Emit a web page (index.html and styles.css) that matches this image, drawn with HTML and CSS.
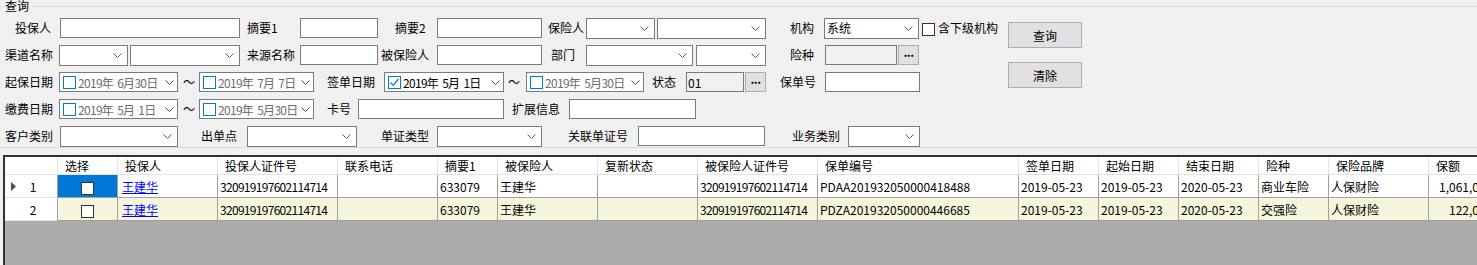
FILE: index.html
```html
<!DOCTYPE html>
<html lang="zh-CN">

<head>
    <meta charset="UTF-8">
    <title>保单查询</title>
    <link rel="stylesheet" href="styles.css">
</head>

<body>
    <fieldset class="query">
        <legend>查询</legend>
        <div class="qbody">
            <div class="rows">
                <!-- 第一行 -->
                <div class="row">
                    <span class="lbl m15">投保人</span>
                    <input class="tb w180 m9" type="text">
                    <span class="lbl w30 m7">摘要1</span>
                    <input class="tb w78 m23" type="text">
                    <span class="lbl w30 m17">摘要2</span>
                    <input class="tb w105 m12" type="text">
                    <span class="lbl m6">保险人</span>
                    <div class="combo w69 m2"><svg class="chev" viewBox="0 0 9 5"><path d="M.5 .5 4.5 4.5 8.5 .5"/></svg></div>
                    <div class="combo w109 m2"><svg class="chev" viewBox="0 0 9 5"><path d="M.5 .5 4.5 4.5 8.5 .5"/></svg></div>
                    <span class="lbl m24">机构</span>
                    <div class="combo w95 m10"><span class="val">系统</span><svg class="chev" viewBox="0 0 9 5"><path d="M.5 .5 4.5 4.5 8.5 .5"/></svg></div>
                    <i class="chk m3"></i>
                    <span class="lbl m3">含下级机构</span>
                </div>
                <!-- 第二行 -->
                <div class="row">
                    <span class="lbl m5">渠道名称</span>
                    <div class="combo w69 m6"><svg class="chev" viewBox="0 0 9 5"><path d="M.5 .5 4.5 4.5 8.5 .5"/></svg></div>
                    <div class="combo w110 m2"><svg class="chev" viewBox="0 0 9 5"><path d="M.5 .5 4.5 4.5 8.5 .5"/></svg></div>
                    <span class="lbl m7">来源名称</span>
                    <input class="tb w78 m5" type="text">
                    <span class="lbl m3">被保险人</span>
                    <input class="tb w105 m8" type="text">
                    <span class="lbl m9">部门</span>
                    <div class="combo w107 m11"><svg class="chev" viewBox="0 0 9 5"><path d="M.5 .5 4.5 4.5 8.5 .5"/></svg></div>
                    <div class="combo w70 m3"><svg class="chev" viewBox="0 0 9 5"><path d="M.5 .5 4.5 4.5 8.5 .5"/></svg></div>
                    <span class="lbl m24">险种</span>
                    <input class="tb ro w72 m11" type="text" readonly>
                    <span class="dots m1">...</span>
                </div>
                <!-- 第三行 -->
                <div class="row">
                    <span class="lbl m5">起保日期</span>
                    <div class="dtp w119 m6"><i class="cb"></i><span class="dt">2019年  6月30日</span><svg class="chev" viewBox="0 0 9 5"><path d="M.5 .5 4.5 4.5 8.5 .5"/></svg></div>
                    <span class="tl m5">～</span>
                    <div class="dtp w115 m4"><i class="cb"></i><span class="dt">2019年  7月  7日</span><svg class="chev" viewBox="0 0 9 5"><path d="M.5 .5 4.5 4.5 8.5 .5"/></svg></div>
                    <span class="lbl m13">签单日期</span>
                    <div class="dtp w120 m9"><i class="cb"><svg viewBox="0 0 11 11"><path d="M1.5 5.5 4.2 8.3 9.5 2"/></svg></i><span class="dt on">2019年  5月  1日</span><svg class="chev" viewBox="0 0 9 5"><path d="M.5 .5 4.5 4.5 8.5 .5"/></svg></div>
                    <span class="tl m4">～</span>
                    <div class="dtp w118 m6"><i class="cb"></i><span class="dt">2019年  5月30日</span><svg class="chev" viewBox="0 0 9 5"><path d="M.5 .5 4.5 4.5 8.5 .5"/></svg></div>
                    <span class="lbl m8">状态</span>
                    <input class="tb ro w58 m10" type="text" value="01" readonly>
                    <span class="dots m1">...</span>
                    <span class="lbl m14">保单号</span>
                    <input class="tb w95 m9" type="text">
                </div>
                <!-- 第四行 -->
                <div class="row">
                    <span class="lbl m5">缴费日期</span>
                    <div class="dtp w119 m6"><i class="cb"></i><span class="dt">2019年  5月  1日</span><svg class="chev" viewBox="0 0 9 5"><path d="M.5 .5 4.5 4.5 8.5 .5"/></svg></div>
                    <span class="tl m5">～</span>
                    <div class="dtp w115 m4"><i class="cb"></i><span class="dt">2019年  5月30日</span><svg class="chev" viewBox="0 0 9 5"><path d="M.5 .5 4.5 4.5 8.5 .5"/></svg></div>
                    <span class="lbl m13">卡号</span>
                    <input class="tb w146 m7" type="text">
                    <span class="lbl m8">扩展信息</span>
                    <input class="tb w127 m9" type="text">
                </div>
                <!-- 第五行 -->
                <div class="row">
                    <span class="lbl m5">客户类别</span>
                    <div class="combo w118 m7"><svg class="chev" viewBox="0 0 9 5"><path d="M.5 .5 4.5 4.5 8.5 .5"/></svg></div>
                    <span class="lbl m23">出单点</span>
                    <div class="combo w110 m10"><svg class="chev" viewBox="0 0 9 5"><path d="M.5 .5 4.5 4.5 8.5 .5"/></svg></div>
                    <span class="lbl m24">单证类型</span>
                    <div class="combo w105 m8"><svg class="chev" viewBox="0 0 9 5"><path d="M.5 .5 4.5 4.5 8.5 .5"/></svg></div>
                    <span class="lbl m26">关联单证号</span>
                    <input class="tb w127 m10" type="text">
                    <span class="lbl m27">业务类别</span>
                    <div class="combo w72 m8"><svg class="chev" viewBox="0 0 9 5"><path d="M.5 .5 4.5 4.5 8.5 .5"/></svg></div>
                </div>
            </div>
            <div class="btns">
                <button class="btn">查询</button>
                <button class="btn">清除</button>
            </div>
        </div>
    </fieldset>

    <div class="grid">
        <table>
            <colgroup>
                <col style="width:53px">
                <col style="width:60px">
                <col style="width:100px">
                <col style="width:120px">
                <col style="width:100px">
                <col style="width:60px">
                <col style="width:100px">
                <col style="width:100px">
                <col style="width:120px">
                <col style="width:201px">
                <col style="width:80px">
                <col style="width:80px">
                <col style="width:80px">
                <col style="width:70px">
                <col style="width:100px">
                <col style="width:83px">
            </colgroup>
            <tr class="head">
                <th class="corner"></th>
                <th>选择</th>
                <th>投保人</th>
                <th>投保人证件号</th>
                <th>联系电话</th>
                <th>摘要1</th>
                <th>被保险人</th>
                <th>复新状态</th>
                <th>被保险人证件号</th>
                <th>保单编号</th>
                <th>签单日期</th>
                <th>起始日期</th>
                <th>结束日期</th>
                <th>险种</th>
                <th>保险品牌</th>
                <th>保额</th>
            </tr>
            <tr>
                <td class="rh"><div class="rhin"><svg class="cur" viewBox="0 0 5 9"><path d="M0 0 5 4.5 0 9z"/></svg><span>1</span></div></td>
                <td class="sel"><i class="cbx"></i></td>
                <td class="lnk"><a href="#">王建华</a></td>
                <td class="num">320919197602114714</td>
                <td></td>
                <td>633079</td>
                <td>王建华</td>
                <td></td>
                <td class="num">320919197602114714</td>
                <td>PDAA201932050000418488</td>
                <td>2019-05-23</td>
                <td>2019-05-23</td>
                <td>2020-05-23</td>
                <td>商业车险</td>
                <td>人保财险</td>
                <td class="amt">1,061,000.00</td>
            </tr>
            <tr class="alt">
                <td class="rh"><div class="rhin"><svg class="cur off" viewBox="0 0 5 9"><path d="M0 0 5 4.5 0 9z"/></svg><span>2</span></div></td>
                <td class="ctr"><i class="cbx"></i></td>
                <td class="lnk"><a href="#">王建华</a></td>
                <td class="num">320919197602114714</td>
                <td></td>
                <td>633079</td>
                <td>王建华</td>
                <td></td>
                <td class="num">320919197602114714</td>
                <td>PDZA201932050000446685</td>
                <td>2019-05-23</td>
                <td>2019-05-23</td>
                <td>2020-05-23</td>
                <td>交强险</td>
                <td>人保财险</td>
                <td class="amt">122,000.00</td>
            </tr>
        </table>
    </div>
</body>

</html>
```

FILE: styles.css
```css
* {
    margin: 0;
    padding: 0;
    box-sizing: border-box;
}

body {
    background-color: #f0f0f0;
    font: 12px "Noto Sans CJK SC", "Noto Sans", sans-serif;
    color: #000;
    overflow: hidden;
}

/* 查询分组框 */
.query {
    margin-top: -2px;
    border: 0;
    border-top: 1px solid #dcdcdc;
    border-bottom: 1px solid #dcdcdc;
    padding-top: 4px;
}

.query legend {
    margin-left: 3px;
    padding: 0 2px;
    line-height: 16px;
}

.qbody {
    display: flex;
}

.rows {
    width: 1008px;
    display: flex;
    flex-direction: column;
    gap: 6px;
}

.row {
    display: flex;
    align-items: flex-start;
    height: 21px;
}

.lbl {
    line-height: 20px;
    white-space: nowrap;
}

.tl {
    line-height: 20px;
    width: 12px;
}

.tb {
    height: 20px;
    border: 1px solid #7a7a7a;
    background-color: #fff;
    padding: 0 1px;
    font: inherit;
    color: #000;
    outline: none;
}

.tb.ro {
    background-color: #f0f0f0;
}

.combo {
    height: 21px;
    border: 1px solid #7a7a7a;
    background-color: #fff;
    display: flex;
    align-items: center;
    padding: 0 5px 0 2px;
}

.combo .val {
    margin-top: -3px;
}

.chev {
    width: 9px;
    height: 5px;
    margin-left: auto;
    fill: none;
    stroke: #606060;
}

.dtp {
    height: 20px;
    border: 1px solid #7a7a7a;
    background-color: #fff;
    display: flex;
    align-items: center;
    padding: 0 3px 0 3px;
}

.dtp .cb {
    width: 13px;
    height: 13px;
    border: 1px solid #0078d7;
    margin-right: 2px;
    display: flex;
    flex-shrink: 0;
}

.dtp .cb svg {
    width: 11px;
    height: 11px;
    fill: none;
    stroke: #0078d7;
    stroke-width: 1.2;
}

.dtp .dt {
    white-space: pre;
    color: #6d6d6d;
    letter-spacing: -0.7px;
}

.dtp .dt.on {
    color: #000;
}

.dtp .chev {
    stroke: #505050;
    flex-shrink: 0;
}

.dots {
    width: 21px;
    height: 20px;
    border: 1px solid #adadad;
    background-color: #e1e1e1;
    font-weight: bold;
    text-align: center;
    line-height: 12px;
    letter-spacing: -0.5px;
}

.chk {
    width: 13px;
    height: 13px;
    margin-top: 5px;
    border: 1px solid #333;
    background-color: #fff;
}

.btns {
    display: flex;
    flex-direction: column;
    gap: 14px;
    padding-top: 4px;
}

.btn {
    width: 74px;
    height: 26px;
    border: 1px solid #adadad;
    background-color: #e1e1e1;
    font: inherit;
    color: #000;
}

/* 间距、宽度 */
.m1 { margin-left: 1px; }
.m2 { margin-left: 2px; }
.m3 { margin-left: 3px; }
.m4 { margin-left: 4px; }
.m5 { margin-left: 5px; }
.m6 { margin-left: 6px; }
.m7 { margin-left: 7px; }
.m8 { margin-left: 8px; }
.m9 { margin-left: 9px; }
.m10 { margin-left: 10px; }
.m11 { margin-left: 11px; }
.m12 { margin-left: 12px; }
.m13 { margin-left: 13px; }
.m14 { margin-left: 14px; }
.m15 { margin-left: 15px; }
.m17 { margin-left: 17px; }
.m23 { margin-left: 23px; }
.m24 { margin-left: 24px; }
.m26 { margin-left: 26px; }
.m27 { margin-left: 27px; }

.w30 { width: 30px; }
.w58 { width: 58px; }
.w69 { width: 69px; }
.w70 { width: 70px; }
.w72 { width: 72px; }
.w78 { width: 78px; }
.w95 { width: 95px; }
.w105 { width: 105px; }
.w107 { width: 107px; }
.w109 { width: 109px; }
.w110 { width: 110px; }
.w115 { width: 115px; }
.w118 { width: 118px; }
.w119 { width: 119px; }
.w120 { width: 120px; }
.w127 { width: 127px; }
.w146 { width: 146px; }
.w180 { width: 180px; }

/* 表格 */
.grid {
    margin: 7px 0 0 3px;
    height: 110px;
    background-color: #ababab;
    border-top: 2px solid #333;
    border-left: 2px solid #333;
    overflow: hidden;
}

.grid table {
    width: 1507px;
    table-layout: fixed;
    border-collapse: separate;
    border-spacing: 0;
}

.grid tr.head {
    height: 18px;
}

.grid tr {
    height: 23px;
}

.grid th {
    background-color: #fff;
    font-weight: normal;
    text-align: left;
    padding-left: 7px;
    border-right: 1px solid #e3e3e3;
    border-bottom: 1px solid #e3e3e3;
    white-space: nowrap;
    overflow: hidden;
}

.grid td {
    background-color: #fff;
    padding: 0 2px;
    border-right: 1px solid #a0a0a0;
    border-bottom: 1px solid #a0a0a0;
    white-space: nowrap;
    overflow: hidden;
}

.grid td.num {
    letter-spacing: -0.7px;
}

.grid tr.alt td {
    background-color: #f5f5dc;
}

.grid td.rh,
.grid tr.alt td.rh {
    background-color: #fff;
    padding: 0;
    border-bottom-color: #e3e3e3;
}

.rhin {
    display: flex;
    align-items: center;
    padding-left: 6px;
}

.cur {
    width: 5px;
    height: 9px;
    fill: #505050;
}

.cur.off {
    visibility: hidden;
}

.rhin span {
    width: 34px;
    text-align: center;
}

.grid td.sel {
    background-color: #0078d7;
    text-align: center;
}

.grid td.ctr {
    text-align: center;
}

.cbx {
    display: inline-block;
    width: 13px;
    height: 13px;
    border: 1px solid #333;
    background-color: #fff;
    vertical-align: middle;
}

.grid td.lnk {
    padding-left: 4px;
}

.lnk a {
    color: #00f;
}

.grid td.amt {
    text-align: right;
}
```
